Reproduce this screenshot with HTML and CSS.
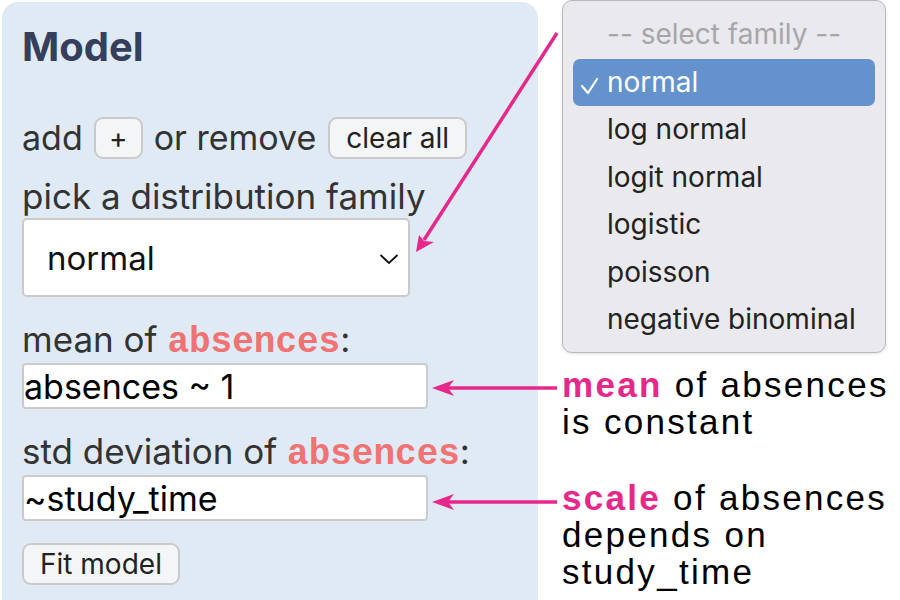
FILE: index.html
```html
<!DOCTYPE html>
<html>
<head>
<meta charset="utf-8">
<link rel="stylesheet" href="styles.css">
</head>
<body>
<div class="page">
  <section class="panel">
    <h1 class="title">Model</h1>
    <div class="addrow">
      <span>add</span>
      <button class="btn btn-plus">+</button>
      <span>or remove</span>
      <button class="btn btn-clear">clear all</button>
    </div>
    <div class="label label-pick">pick a distribution family</div>
    <div class="select">
      <span>normal</span>
      <svg class="chev" width="20" height="12" viewBox="0 0 20 12"><polyline points="1.5,2 10,10 18.5,2" fill="none" stroke="#111" stroke-width="1.8"/></svg>
    </div>
    <div class="label">mean of <span class="mono">absences</span>:</div>
    <input class="field" type="text" value="absences ~ 1">
    <div class="label">std deviation of <span class="mono">absences</span>:</div>
    <input class="field" type="text" value="~study_time">
    <button class="btn btn-fit">Fit model</button>
  </section>
  <aside class="notes">
    <p class="note"><b class="hl">mean</b> of absences<br>is constant</p>
    <p class="note note-2"><b class="hl">scale</b> of absences<br>depends on<br>study_time</p>
  </aside>
</div>

<div class="menu">
  <div class="opt opt-head">-- select family --</div>
  <div class="opt opt-sel"><svg class="check" width="30" height="40" viewBox="0 0 30 40"><polyline points="9,24 15,31 24,17" fill="none" stroke="#fff" stroke-width="2.2" stroke-linecap="round" stroke-linejoin="round"/></svg>normal</div>
  <div class="opt">log normal</div>
  <div class="opt">logit normal</div>
  <div class="opt">logistic</div>
  <div class="opt">poisson</div>
  <div class="opt">negative binominal</div>
</div>

<svg class="arrows" width="900" height="600" viewBox="0 0 900 600">
  <g fill="#e6288a" stroke="#e6288a">
    <line x1="557" y1="33" x2="424" y2="240" stroke-width="3.5"/>
    <polygon points="416,252 419,235 424,241 434,242" stroke="none"/>
    <line x1="557" y1="388" x2="446" y2="388" stroke-width="3.5"/>
    <polygon points="432,388 454,380 448,388 454,396" stroke="none"/>
    <line x1="557" y1="502" x2="446" y2="502" stroke-width="3.5"/>
    <polygon points="432,502 454,494 448,502 454,510" stroke="none"/>
  </g>
</svg>
</body>
</html>
```

FILE: styles.css
```css
* { box-sizing: border-box; }
html, body { margin: 0; padding: 0; background: #fff; }
body { width: 900px; height: 600px; overflow: hidden; position: relative; font-family: Inter, "Noto Sans", sans-serif; }

.page { display: flex; align-items: flex-start; height: 600px; overflow: hidden; }

.panel {
  margin: 2px 0 0 2px;
  width: 536px;
  height: 640px;
  padding: 21px 20px 0 20px;
  background: #e0eaf5;
  border-radius: 16px;
  display: flex;
  flex-direction: column;
  align-items: flex-start;
  color: #333333;
}

.title {
  margin: 0;
  font-size: 40px;
  line-height: 48px;
  font-weight: 700;
  color: #353f5b;
}

.addrow {
  margin-top: 46px;
  display: flex;
  align-items: center;
  gap: 11px;
  font-size: 34px;
  line-height: 42px;
}

.btn {
  font-family: Inter, "Noto Sans", sans-serif;
  font-size: 28px;
  line-height: 38px;
  height: 42px;
  padding: 0 14px;
  color: #222;
  background: #f4f5f7;
  border: 2px solid #cacaca;
  border-radius: 9px;
}
.btn-plus { width: 49px; padding: 0; }
.btn-clear { padding: 0 16px; margin-left: 1px; }

.label {
  margin-top: 22px;
  font-size: 35px;
  line-height: 40px;
  white-space: nowrap;
}
.label-pick { margin-top: 17px; }

.mono {
  font-family: "Courier New", "Liberation Mono", monospace;
  font-weight: 700;
  font-size: 36px;
  line-height: 1;
  color: #f07272;
}

.select {
  margin-top: 2px;
  width: 388px;
  height: 79px;
  background: #fff;
  border: 2px solid #cbcbcb;
  border-radius: 5px;
  padding: 0 8px 0 23px;
  display: flex;
  align-items: center;
  justify-content: space-between;
  font-size: 33px;
  color: #111;
}
.chev { margin-top: 2px; margin-right: 1px; }

.field {
  margin-top: 2px;
  width: 406px;
  height: 46px;
  border: 2px solid #cbcbcb;
  border-radius: 4px;
  background: #fff;
  padding: 0 0 0 0;
  font-family: Inter, "Noto Sans", sans-serif;
  font-size: 34px;
  color: #000;
  outline: none;
}

.btn-fit { margin-top: 22px; padding: 0 16px; }

.notes {
  margin-left: 24px;
  padding-top: 366px;
  font-family: "Liberation Sans", Arial, sans-serif;
  font-size: 35px;
  line-height: 37px;
  letter-spacing: 2.3px;
  color: #000;
}
.note { margin: 0; white-space: nowrap; }
.note-2 { margin-top: 39px; }
.hl { color: #e6288a; }

.menu {
  position: absolute;
  left: 562px;
  top: 0;
  width: 324px;
  height: 353px;
  padding: 10px 10px 0 10px;
  background: #e9e9ee;
  border: 1px solid #b8b8bd;
  border-radius: 10px;
  box-shadow: 0 1px 3px rgba(0,0,0,0.12);
  font-size: 28px;
  color: #222;
}
.opt {
  position: relative;
  height: 47.5px;
  line-height: 47.5px;
  padding-left: 34px;
  border-radius: 7px;
  white-space: nowrap;
}
.opt-head { color: #a6a6aa; }
.opt-sel { background: #6492cd; color: #fff; }
.check { position: absolute; left: 0; top: 3px; }

.arrows { position: absolute; left: 0; top: 0; pointer-events: none; }
```
